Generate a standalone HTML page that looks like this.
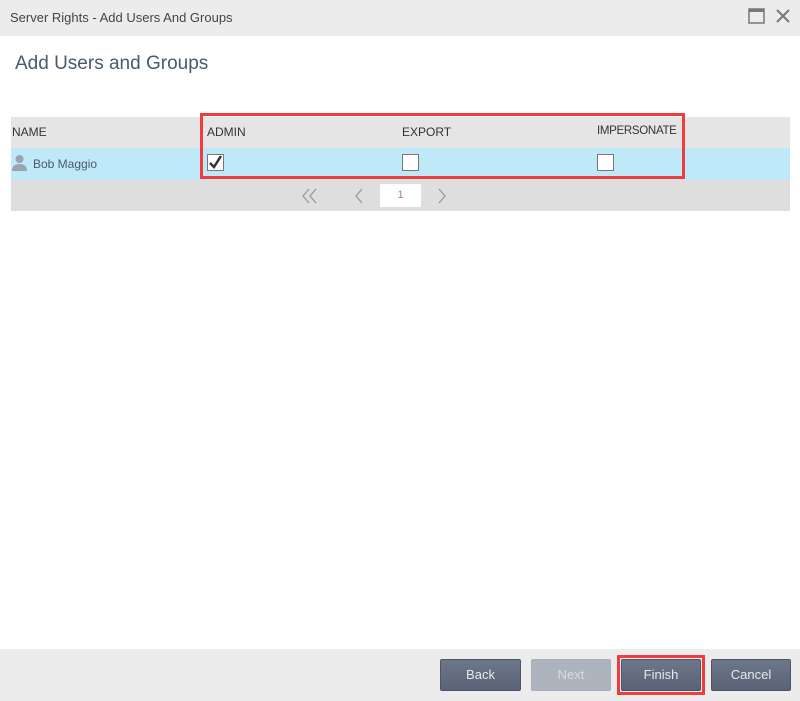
<!DOCTYPE html><html><head><style>
*{margin:0;padding:0;box-sizing:border-box}
body{width:800px;height:701px;position:relative;background:#fff;font-family:"Liberation Sans",sans-serif;overflow:hidden}
.a{position:absolute}
.btn{position:absolute;top:659px;height:32px;border:1px solid #4d5666;background:linear-gradient(#6e7789,#5a6376);color:#e6e8ec;font-size:13px;text-align:center;line-height:30px;border-radius:2px}
.cb{position:absolute;width:17px;height:17px;border:1px solid #777;background:#fff;top:154px}
</style></head><body>
<div class="a" style="left:0;top:0;width:800px;height:36px;background:#ececec"></div>
<div class="a" style="left:10px;top:10px;font-size:13px;color:#444">Server Rights - Add Users And Groups</div>
<svg class="a" style="left:748px;top:8px" width="18" height="17"><rect x="1" y="1" width="15" height="14" fill="none" stroke="#777" stroke-width="1.5"/><rect x="1" y="1" width="15" height="3" fill="#777"/></svg>
<svg class="a" style="left:775px;top:8px" width="16" height="16"><path d="M2 2L14 14M14 2L2 14" stroke="#777" stroke-width="2"/></svg>
<div class="a" style="left:15px;top:53px;font-size:19px;color:#4a5a6e">Add Users and Groups</div>
<div class="a" style="left:11px;top:117px;width:779px;height:31px;background:#e5e5e5"></div>
<div class="a" style="left:11px;top:148px;width:779px;height:32px;background:#bfe8f9"></div>
<div class="a" style="left:11px;top:180px;width:779px;height:31px;background:#dedede"></div>
<div class="a" style="left:12px;top:125px;font-size:12px;color:#333">NAME</div>
<div class="a" style="left:207px;top:125px;font-size:12px;color:#333">ADMIN</div>
<div class="a" style="left:402px;top:125px;font-size:12px;color:#333">EXPORT</div>
<div class="a" style="left:597px;top:125px;font-size:11.5px;letter-spacing:-0.3px;color:#333">IMPERSONATE</div>
<svg class="a" style="left:12px;top:154px" width="15" height="17"><circle cx="7.5" cy="5" r="4" fill="#9aa3b0"/><path d="M0 17Q0 10 7.5 10Q15 10 15 17Z" fill="#9aa3b0"/></svg>
<div class="a" style="left:33px;top:157px;font-size:12px;color:#4a5a6e">Bob Maggio</div>
<div class="cb" style="left:207px"><svg width="15" height="15" style="position:absolute;left:0;top:0"><path d="M2 8L6 12L13 1" fill="none" stroke="#333" stroke-width="2.5"/></svg></div>
<div class="cb" style="left:402px"></div>
<div class="cb" style="left:597px"></div>
<div class="a" style="left:200px;top:113px;width:485px;height:66px;border:3px solid #f03c3c"></div>
<svg class="a" style="left:300px;top:187px" width="20" height="18"><path d="M9 2L3 9L9 16M16 2L10 9L16 16" fill="none" stroke="#999" stroke-width="1.3"/></svg>
<svg class="a" style="left:353px;top:187px" width="12" height="18"><path d="M9 2L3 9L9 16" fill="none" stroke="#999" stroke-width="1.3"/></svg>
<div class="a" style="left:380px;top:184px;width:41px;height:23px;background:#fff;font-size:11px;color:#b08080;text-align:center;line-height:23px">1</div>
<svg class="a" style="left:436px;top:187px" width="12" height="18"><path d="M3 2L9 9L3 16" fill="none" stroke="#999" stroke-width="1.3"/></svg>
<div class="a" style="left:0;top:649px;width:800px;height:52px;background:#ececec"></div>
<div class="btn" style="left:440px;width:81px">Back</div>
<div class="btn" style="left:531px;width:80px;background:#aeb4be;border-color:#a8aeb8;color:#d8dbe0">Next</div>
<div class="btn" style="left:621px;width:80px">Finish</div>
<div class="a" style="left:617px;top:655px;width:88px;height:40px;border:3px solid #f03c3c"></div>
<div class="btn" style="left:711px;width:80px">Cancel</div>
</body></html>
